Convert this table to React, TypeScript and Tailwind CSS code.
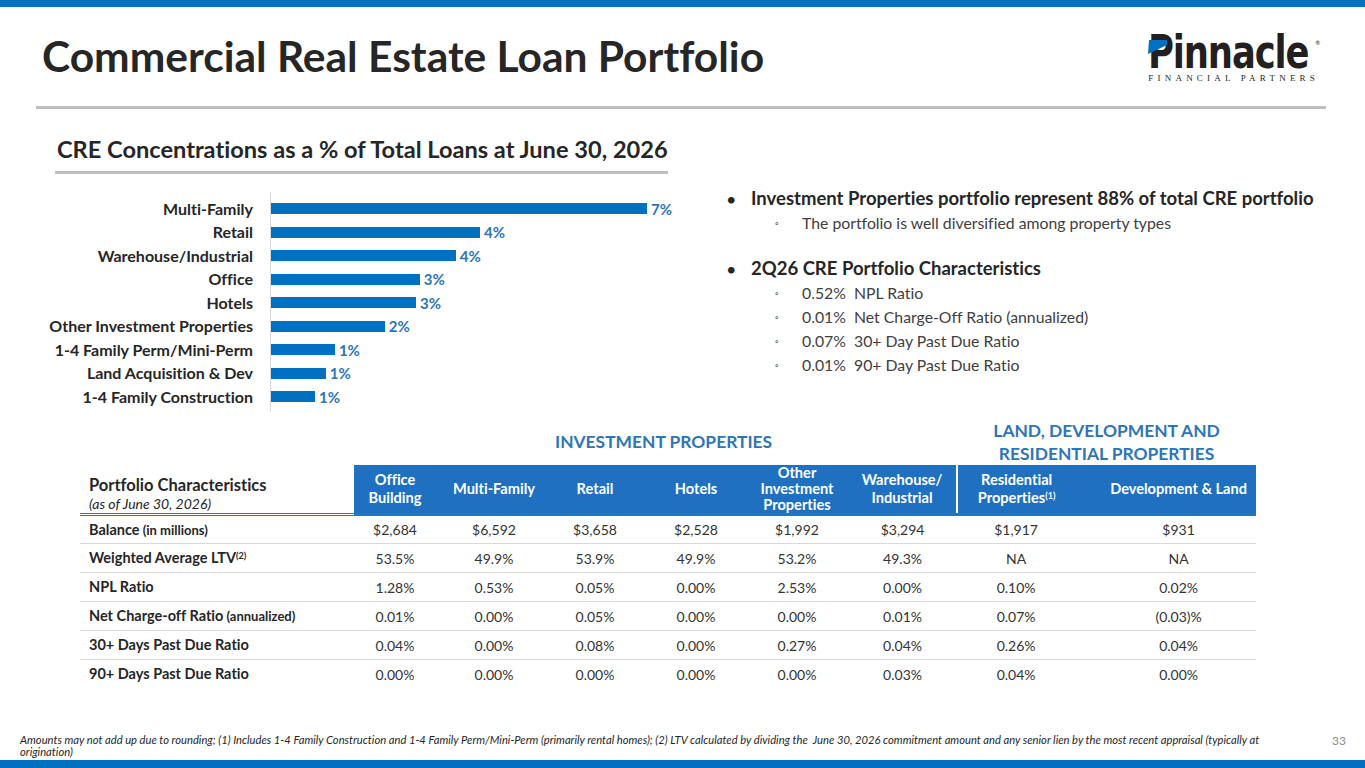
import React from "react"

const bars = [
  { label: "Multi-Family", value: 7.0, text: "7%" },
  { label: "Retail", value: 3.89, text: "4%" },
  { label: "Warehouse/Industrial", value: 3.44, text: "4%" },
  { label: "Office", value: 2.77, text: "3%" },
  { label: "Hotels", value: 2.7, text: "3%" },
  { label: "Other Investment Properties", value: 2.12, text: "2%" },
  { label: "1-4 Family Perm/Mini-Perm", value: 1.19, text: "1%" },
  { label: "Land Acquisition & Dev", value: 1.02, text: "1%" },
  { label: "1-4 Family Construction", value: 0.82, text: "1%" },
]

const rows = [
  { label: "Balance", note: " (in millions)", values: ["$2,684", "$6,592", "$3,658", "$2,528", "$1,992", "$3,294", "$1,917", "$931"] },
  { label: "Weighted Average LTV", sup: "(2)", values: ["53.5%", "49.9%", "53.9%", "49.9%", "53.2%", "49.3%", "NA", "NA"] },
  { label: "NPL Ratio", values: ["1.28%", "0.53%", "0.05%", "0.00%", "2.53%", "0.00%", "0.10%", "0.02%"] },
  { label: "Net Charge-off Ratio", note: " (annualized)", values: ["0.01%", "0.00%", "0.05%", "0.00%", "0.00%", "0.01%", "0.07%", "(0.03)%"] },
  { label: "30+ Days Past Due Ratio", values: ["0.04%", "0.00%", "0.08%", "0.00%", "0.27%", "0.04%", "0.26%", "0.04%"] },
  { label: "90+ Days Past Due Ratio", values: ["0.00%", "0.00%", "0.00%", "0.00%", "0.00%", "0.03%", "0.04%", "0.00%"] },
]

const BAR_MAX = 376 // px width of the 7% bar

function Logo() {
  return (
    <div className="mt-[26px] flex flex-col items-start">
      <div className="relative h-[40px] w-[170px]">
        <span className="absolute left-0 top-[1px] origin-left scale-x-[0.77] font-['DejaVu_Sans',sans-serif] text-[46px] font-bold leading-[36px] tracking-[-1.5px] text-[#231f20]">
          Pinnacle
        </span>
        <svg className="absolute left-0 top-[7px]" width="22" height="15" viewBox="0 0 22 15">
          <polygon points="1,0 19,0 19,5 0,14" fill="#0070c0" />
        </svg>
        <span className="absolute right-[-2px] top-[7px] text-[6px] leading-none text-[#231f20]">®</span>
      </div>
      <div className="font-['Liberation_Serif',serif] text-[9px] leading-[10px] tracking-[4.2px] text-[#231f20]">
        FINANCIAL PARTNERS
      </div>
    </div>
  )
}

function Chart() {
  return (
    <div className="ml-[30px] mt-[18px] flex">
      <div className="w-[223px] pt-[5px] pb-[3px]">
        {bars.map((b) => (
          <div key={b.label} className="flex h-[23.5px] items-center justify-end text-[16px] font-bold whitespace-nowrap">
            {b.label}
          </div>
        ))}
      </div>
      <div className="ml-[17px] border-l border-[#d9d9d9] pt-[5px] pb-[3px]">
        {bars.map((b) => (
          <div key={b.label} className="flex h-[23.5px] items-center">
            <div className="h-[11px] bg-[#0070c0]" style={{ width: (b.value / 7) * BAR_MAX }} />
            <span className="ml-[4px] text-[15px] font-bold text-[#2e75b6]">{b.text}</span>
          </div>
        ))}
      </div>
    </div>
  )
}

function Bullet({ children }: { children: React.ReactNode }) {
  return (
    <div className="flex h-[24px] items-center">
      <span className="w-[25px] text-[18px] leading-none">•</span>
      <span className="text-[18.5px] font-bold">{children}</span>
    </div>
  )
}

function Sub({ children }: { children: React.ReactNode }) {
  return (
    <div className="flex h-[24px] items-center pl-[49px]">
      <span className="w-[27px] text-[10px] leading-none text-[#404040]">◦</span>
      <span className="text-[15.8px] text-[#404040]">{children}</span>
    </div>
  )
}

const headers = [
  ["Office", "Building"],
  ["Multi-Family"],
  ["Retail"],
  ["Hotels"],
  ["Other", "Investment", "Properties"],
  ["Warehouse/", "Industrial"],
]

export default function App() {
  return (
    <div className="relative flex h-[768px] w-[1365px] flex-col overflow-hidden bg-white font-['Lato',sans-serif] text-[#262626] [font-variant-ligatures:none]">
      <div className="h-[7px] shrink-0 bg-[#0070c0]" />
      <header className="flex h-[99px] shrink-0 items-start justify-between pl-[42px] pr-[46px]">
        <h1 className="mt-[24px] text-[42.5px] font-bold leading-[50px] text-[#262626]">Commercial Real Estate Loan Portfolio</h1>
        <Logo />
      </header>
      <div className="ml-[36px] h-[3px] w-[1290px] shrink-0 bg-[#bfbfbf]" />

      <section className="flex h-[309px] shrink-0">
        <div className="w-[700px]">
          <h2 className="ml-[57px] mt-[26px] text-[23.6px] font-bold leading-[28px]">
            CRE Concentrations as a % of Total Loans at June 30, 2026
          </h2>
          <div className="ml-[55px] mt-[8px] h-[3px] w-[613px] bg-[#bfbfbf]" />
          <Chart />
        </div>
        <div className="ml-[26px] mt-[78px]">
          <Bullet>Investment Properties portfolio represent 88% of total CRE portfolio</Bullet>
          <Sub>The portfolio is well diversified among property types</Sub>
          <div className="h-[22px]" />
          <Bullet>2Q26 CRE Portfolio Characteristics</Bullet>
          <Sub>0.52%&nbsp; NPL Ratio</Sub>
          <Sub>0.01%&nbsp; Net Charge-Off Ratio (annualized)</Sub>
          <Sub>0.07%&nbsp; 30+ Day Past Due Ratio</Sub>
          <Sub>0.01%&nbsp; 90+ Day Past Due Ratio</Sub>
        </div>
      </section>

      <table className="ml-[80px] w-[1176px] table-fixed border-collapse">
        <colgroup>
          <col className="w-[274px]" />
          <col className="w-[90px]" />
          <col className="w-[100px]" />
          <col className="w-[102px]" />
          <col className="w-[100px]" />
          <col className="w-[102px]" />
          <col className="w-[109px]" />
          <col className="w-[118px]" />
          <col className="w-[181px]" />
        </colgroup>
        <thead>
          <tr className="h-[47px]">
            <th />
            <th colSpan={6} className="pl-[16px] text-center align-middle text-[17.4px] font-bold leading-[23px] text-[#2e75b6]">
              INVESTMENT PROPERTIES
            </th>
            <th colSpan={2} className="text-center align-middle text-[17.4px] font-bold leading-[23px] text-[#2e75b6]">
              LAND, DEVELOPMENT AND
              <br />
              RESIDENTIAL PROPERTIES
            </th>
          </tr>
          <tr className="h-[49px] border-b-[3px] border-double border-[#2e75b6]">
            <th className="pl-[9px] text-left align-bottom font-normal">
              <div className="text-[16.5px] font-bold leading-[19px]">Portfolio Characteristics</div>
              <div className="text-[14px] italic leading-[18px]">(as of June 30, 2026)</div>
            </th>
            {headers.map((lines, i) => (
              <th
                key={i}
                className={`bg-[#1f70c0] text-center align-middle text-[14.6px] font-bold text-white ${i === 4 ? "leading-[16px]" : "leading-[18px]"} ${i === 0 ? "pr-[8px]" : ""}`}
              >
                {lines.map((l) => (
                  <div key={l}>{l}</div>
                ))}
              </th>
            ))}
            <th className="border-l-2 border-white bg-[#1f70c0] text-center align-middle text-[14.6px] font-bold leading-[18px] text-white">
              <div>Residential</div>
              <div>
                Properties<sup className="text-[9px]">(1)</sup>
              </div>
            </th>
            <th className="bg-[#1f70c0] pl-[26px] text-center align-middle text-[14.6px] font-bold leading-[18px] text-white">
              Development &amp; Land
            </th>
          </tr>
        </thead>
        <tbody>
          {rows.map((r, ri) => (
            <tr key={r.label} className={`h-[29px] ${ri < rows.length - 1 ? "border-b border-[#d9d9d9]" : ""}`}>
              <td className="pl-[9px] text-[14.5px] font-bold">
                {r.label}
                {r.sup && <sup className="text-[9px]">{r.sup}</sup>}
                {r.note && <span className="text-[13px]">{r.note}</span>}
              </td>
              {r.values.map((v, i) => (
                <td
                  key={i}
                  className={`text-center text-[14px] text-[#333333] ${i === 0 ? "pr-[8px]" : ""} ${i === 7 ? "pl-[26px]" : ""}`}
                >
                  {v}
                </td>
              ))}
            </tr>
          ))}
        </tbody>
      </table>

      <footer className="mt-auto flex shrink-0 items-start pb-[2px]">
        <p className="ml-[20px] w-[1250px] text-[11.2px] italic leading-[12px] text-[#262626]">
          Amounts may not add up due to rounding; (1) Includes 1-4 Family Construction and 1-4 Family Perm/Mini-Perm (primarily rental homes); (2) LTV calculated by dividing the&nbsp; June 30, 2026 commitment amount and any senior lien by the most recent appraisal (typically at origination)
        </p>
        <span className="ml-auto mr-[19px] text-[12px] leading-[14px] text-[#8c8c8c]">33</span>
      </footer>
      <div className="h-[8px] shrink-0 bg-[#0070c0]" />
    </div>
  )
}
